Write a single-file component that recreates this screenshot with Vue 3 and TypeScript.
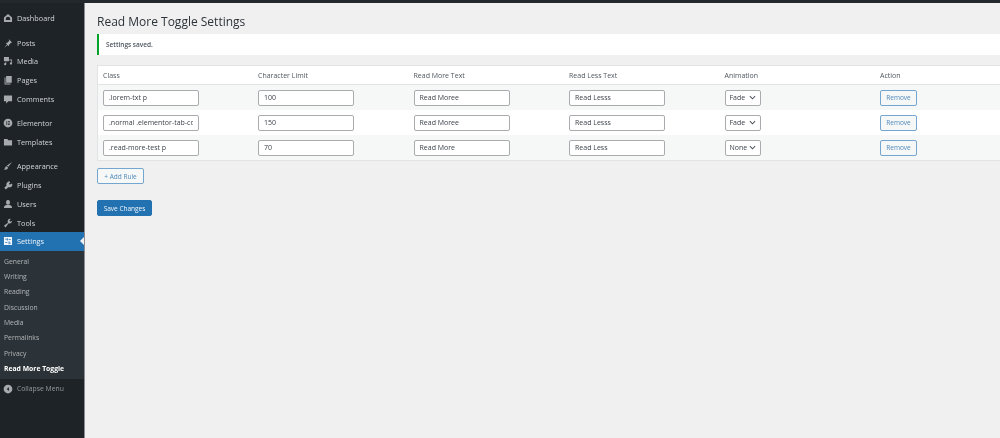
<script setup lang="ts">
interface Item { label: string; icon: string; gapBefore?: boolean }
const menu: Item[] = [
  { label: 'Dashboard', icon: 'M8 1.500l6.500 5.500v7.500h-13V7zM8 6a3.500 3.500 0 0 0-3.500 3.500V11h7V9.500A3.500 3.500 0 0 0 8 6z', gapBefore: false },
  { label: 'Posts', icon: 'M9 1.500l5.500 5.500-1.500.5-3 3-.5 2.500-2-2-5.500 4.500 4.500-5.500-2-2 2.500-.5 3-3z', gapBefore: true },
  { label: 'Media', icon: 'M1.500 1.500h8v7h-8zM4 9.500h1.200v3.500a1.800 1.800 0 1 1-1.200-1.700zM10 5.500h4.500v6.500a1.800 1.800 0 1 1-1.200-1.700V7H10z' },
  { label: 'Pages', icon: 'M5 1.500h9v11H5zM2.500 4H4v9.500h8V15H2.500z' },
  { label: 'Comments', icon: 'M1.500 2.500h13v9H8.500L5 15v-3.500H1.500z' },
  { label: 'Elementor', icon: 'M8 1a7 7 0 1 1 0 14A7 7 0 0 1 8 1zM5.500 5v6h1.200V5zM8 5v1.200h3V5zM8 7.400v1.200h3V7.400zM8 9.800V11h3V9.800z', gapBefore: true },
  { label: 'Templates', icon: 'M1.500 3h5.500l1.500 2h6v8.500h-13z' },
  { label: 'Appearance', icon: 'M14.500 1.500L8.500 9 6 7.500zM5.500 8.500l2.500 2c0 2.500-3 4-6.500 3.500 2-1 1.500-5 4-5.500z', gapBefore: true },
  { label: 'Plugins', icon: 'M9.500 1.500l2 2-2 2.500 1.500 1.500 2.500-2 1.500 1.500c0 3.500-3.500 5.500-6.500 4.500l-4 3.500-2.500-2.500 3.500-3.500c-1-2.500 1-6 4-7z' },
  { label: 'Users', icon: 'M8 1.500a3 3 0 0 1 3 3.500A3 3 0 0 1 8 9a3 3 0 0 1-3-4A3 3 0 0 1 8 1.500zM1.500 14.500c0-3 2-5 4-5h5c2 0 4 2 4 5z' },
  { label: 'Tools', icon: 'M14.500 4.500a4 4 0 0 1-5.500 4l-5 6.500-2.500-2.500L8 7.500a4 4 0 0 1 4.500-6L10 4l2 2z' },
]
const subs: string[] = ['General', 'Writing', 'Reading', 'Discussion', 'Media', 'Permalinks', 'Privacy']
const headers: string[] = ['Class', 'Character Limit', 'Read More Text', 'Read Less Text', 'Animation', 'Action']
const rows = [
  { cls: '.lorem-txt p', limit: '100', more: 'Read Moree', less: 'Read Lesss', anim: 'Fade' },
  { cls: '.normal .elementor-tab-content', limit: '150', more: 'Read Moree', less: 'Read Lesss', anim: 'Fade' },
  { cls: '.read-more-test p', limit: '70', more: 'Read More', less: 'Read Less', anim: 'None' },
]
</script>

<template>
  <div class="page">
    <aside class="side">
      <ul class="menu">
        <li v-for="m in menu" :key="m.label" class="item" :class="{ gap: m.gapBefore }">
          <svg class="ico" viewBox="0 0 16 16"><path :d="m.icon" fill-rule="evenodd" /></svg>
          <span>{{ m.label }}</span>
        </li>
        <li class="item current">
          <svg class="ico" viewBox="0 0 16 16"><path fill-rule="evenodd" d="M1.500 1.500h13v13h-13zM3.500 4.500v1h3v1.500h1.200V3.500H6.500v1zM9 5v1.200h3.500V5zM3.500 10v1.200h3.500V10zM9 8.500V13h1.200v-1h2.300v-1.200h-2.300V8.500z" /></svg>
          <span>Settings</span>
          <i class="arrow"></i>
        </li>
      </ul>
      <ul class="sub">
        <li v-for="s in subs" :key="s">{{ s }}</li>
        <li class="on">Read More Toggle</li>
      </ul>
      <div class="item collapse">
        <svg class="ico" viewBox="0 0 16 16"><path fill-rule="evenodd" d="M8 1a7 7 0 1 1 0 14A7 7 0 0 1 8 1zM9.500 5L6 8l3.500 3z" /></svg>
        <span>Collapse Menu</span>
      </div>
    </aside>

    <main class="main">
      <h1>Read More Toggle Settings</h1>
      <div class="notice">Settings saved.</div>
      <table class="tbl">
        <thead>
          <tr><th v-for="h in headers" :key="h">{{ h }}</th></tr>
        </thead>
        <tbody>
          <tr v-for="r in rows" :key="r.cls">
            <td><input class="field" :value="r.cls" /></td>
            <td><input class="field" :value="r.limit" /></td>
            <td><input class="field" :value="r.more" /></td>
            <td><input class="field" :value="r.less" /></td>
            <td>
              <span class="select">{{ r.anim }}
                <svg viewBox="0 0 8 5" class="chev"><path d="M1 1l3 3 3-3" /></svg>
              </span>
            </td>
            <td><button class="btn">Remove</button></td>
          </tr>
        </tbody>
      </table>
      <button class="btn add">+ Add Rule</button>
      <button class="save">Save Changes</button>
    </main>
  </div>
</template>

<style>
html, body { margin: 0; background: #f0f0f1; overflow: hidden; }
</style>

<style scoped>
.page {
  display: flex;
  width: 1000px;
  height: 438px;
  background: #f0f0f1;
  border-top: 3px solid #23282d;
  box-sizing: border-box;
  font-family: "Open Sans", "Liberation Sans", sans-serif;
  font-size: 7.500px;
  color: #3c434a;
  filter: blur(0.75px);
  overflow: hidden;
}
.side {
  width: 84px;
  flex: none;
  background: #1d2327;
  border-right: 1px solid #8a8e92;
  color: #d2d5d7;
  padding-top: 6px;
  box-sizing: content-box;
}
ul { list-style: none; margin: 0; padding: 0; }
.item {
  display: flex;
  align-items: center;
  height: 18.800px;
  padding-left: 3px;
  gap: 4px;
  font-size: 7.300px;
}
.item.gap { margin-top: 5.400px; }
.ico { width: 10px; height: 10px; fill: #a7aaad; flex: none; }
.current {
  position: relative;
  background: #2271b1;
  color: #f0f6fc;
}
.current .ico { fill: #f0f6fc; }
.arrow {
  position: absolute;
  right: 0;
  top: 5px;
  border: 4px solid transparent;
  border-right: 4px solid #f0f0f1;
  border-left: 0;
}
.sub {
  background: #2c3338;
  padding: 3px 0 3px 4px;
  color: #b2b5b8;
  font-size: 6.800px;
}
.sub li { height: 15.350px; line-height: 15.350px; }
.sub .on { color: #fff; font-weight: 700; }
.collapse { color: #969a9d; font-size: 6.800px; }
.main {
  flex: 1;
  min-width: 0;
  padding: 0 0 0 12px;
}
h1 {
  margin: 11px 0 4px;
  font-size: 12px;
  line-height: 16px;
  font-weight: 400;
  color: #2c3338;
}
.notice {
  height: 21px;
  line-height: 21px;
  background: #fff;
  border-left: 2px solid #00a32a;
  padding-left: 7px;
  font-size: 6.500px;
  font-weight: 600;
  color: #50575e;
}
.tbl {
  width: 934px;
  margin-top: 10px;
  border-collapse: collapse;
  table-layout: fixed;
  background: #fff;
  border: 1px solid #e2e3e4;
}
th {
  height: 18px;
  padding: 0 0 0 5px;
  text-align: left;
  font-weight: 400;
  font-size: 7px;
  color: #50575e;
  border-bottom: 1px solid #e2e3e4;
}
td { height: 25px; padding: 0 0 0 5px; }
tbody tr:nth-child(odd) { background: #f6f7f7; }
.field {
  display: block;
  width: 96px;
  height: 16px;
  box-sizing: border-box;
  padding: 0 5px;
  border: 1px solid #a9abae;
  border-radius: 2px;
  background: #fff;
  font: 7px "Open Sans", "Liberation Sans", sans-serif;
  color: #3c434a;
}
.select {
  display: flex;
  align-items: center;
  justify-content: space-between;
  width: 36px;
  height: 16px;
  box-sizing: border-box;
  padding: 0 4px;
  border: 1px solid #a9abae;
  border-radius: 2px;
  background: #fff;
  font-size: 7px;
  color: #3c434a;
}
.chev { width: 7px; height: 5px; fill: none; stroke: #50575e; stroke-width: 1.200; }
.btn {
  display: block;
  width: 37px;
  height: 16px;
  padding: 0;
  border: 1px solid #74a6cf;
  border-radius: 2px;
  background: #f6f7f7;
  color: #4f8abb;
  font: 6.500px "Open Sans", "Liberation Sans", sans-serif;
}
.add { width: 47px; margin-top: 7px; }
.save {
  display: block;
  width: 55px;
  height: 16px;
  margin-top: 16px;
  padding: 0;
  border: 1px solid #2271b1;
  border-radius: 2px;
  background: #2271b1;
  color: #f0f6fc;
  font: 6.500px "Open Sans", "Liberation Sans", sans-serif;
}
</style>
